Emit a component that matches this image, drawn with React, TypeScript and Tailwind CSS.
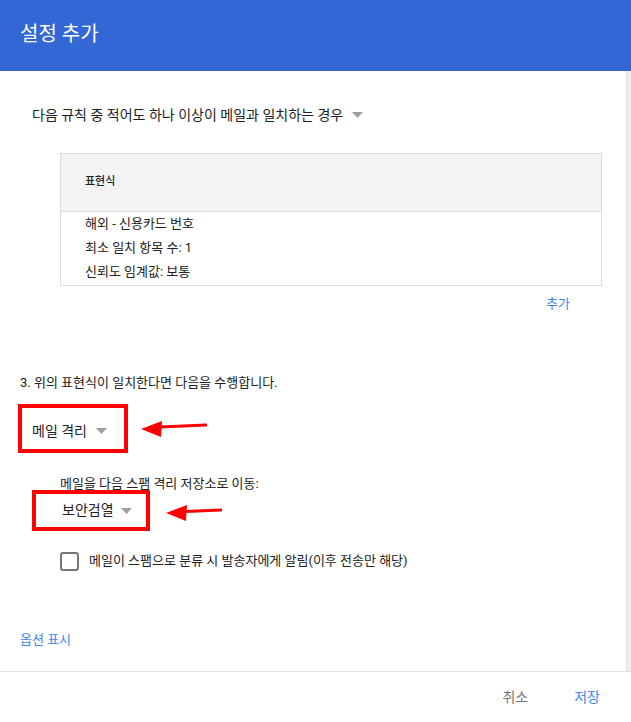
import React from 'react';

const font = "font-['Roboto','Noto_Sans_CJK_KR',sans-serif]";

function Caret() {
  return (
    <svg width="11" height="6" viewBox="0 0 11 6" className="shrink-0">
      <path d="M0 0 L11 0 L5.5 6 Z" fill="#9e9e9e" />
    </svg>
  );
}

function RedArrow({ width, tilt }: { width: number; tilt: number }) {
  return (
    <svg width={width} height="20" viewBox={`0 0 ${width} 20`} className="shrink-0">
      <path d={`M19 ${10 - tilt / 2} L${width - 1} ${10 - tilt}`} stroke="#ff0000" strokeWidth="3" strokeLinecap="round" />
      <path d="M0 10 L21 2 L20 18 Z" fill="#ff0000" />
    </svg>
  );
}

export default function App() {
  return (
    <div className={`w-[631px] h-[722px] bg-white flex flex-col overflow-hidden ${font}`}>
      {/* Header */}
      <div className="h-[71px] shrink-0 bg-[#3367d6] px-5 flex items-center">
        <h1 className="text-white text-[20px] leading-none pb-[3px]">설정 추가</h1>
      </div>

      {/* Body */}
      <div className="flex flex-1 min-h-0">
        <div className="flex-1 flex flex-col text-[#212121]">
          <div className="pt-[34px] pl-8 flex items-center gap-[9px] text-[14px] leading-5">
            <span>다음 규칙 중 적어도 하나 이상이 메일과 일치하는 경우</span>
            <Caret />
          </div>

          <div className="mt-7 ml-[60px] w-[542px] border border-[#dcdcdc]">
            <div className="h-[58px] bg-[#f3f3f3] border-b border-[#dcdcdc] pl-6 flex items-center text-[11px] font-medium">
              표현식
            </div>
            <div className="pl-6 text-[13px] leading-6 pb-[1px]">
              <div>해외 - 신용카드 번호</div>
              <div>최소 일치 항목 수: 1</div>
              <div>신뢰도 임계값: 보통</div>
            </div>
          </div>

          <div className="mt-2 pr-[56px] flex justify-end">
            <span className="text-[#4285f4] text-[13px] leading-5">추가</span>
          </div>

          <div className="mt-[59px] pl-5 text-[13px] leading-5">3. 위의 표현식이 일치한다면 다음을 수행합니다.</div>

          <div className="mt-[11px] ml-[18px] flex items-center gap-[13px]">
            <div className="w-[110px] h-[49px] border-4 border-[#ff0000] pl-[10px] pt-[5px] flex items-center gap-[9px] text-[14px]">
              <span>메일 격리</span>
              <Caret />
            </div>
            <RedArrow width={66} tilt={4} />
          </div>

          <div className="mt-[21px] pl-[60px] text-[13px] leading-5">메일을 다음 스팸 격리 저장소로 이동:</div>

          <div className="-mt-1 ml-8 flex items-center gap-[16px]">
            <div className="w-[118px] h-[41px] border-4 border-[#ff0000] pl-[26px] flex items-center gap-[7px] text-[14px]">
              <span>보안검열</span>
              <Caret />
            </div>
            <div className="pt-[4px]">
              <RedArrow width={56} tilt={3} />
            </div>
          </div>

          <div className="mt-5 pl-[60px] flex items-center gap-[10px] text-[13px] leading-5">
            <div className="w-[19px] h-[19px] border-2 border-[#757575] rounded-[3px]" />
            <span>메일이 스팸으로 분류 시 발송자에게 알림(이후 전송만 해당)</span>
          </div>

          <div className="mt-[59px] pl-5 text-[13px] leading-5 text-[#4285f4]">옵션 표시</div>
        </div>
        <div className="w-[5px] bg-[#ececec] border-l border-[#e3e3e3]" />
      </div>

      {/* Footer */}
      <div className="h-[51px] shrink-0 border-t border-[#e0e0e0] flex items-center justify-end gap-[46px] pr-[31px] text-[14px]">
        <span className="text-[#757575]">취소</span>
        <span className="text-[#4285f4]">저장</span>
      </div>
    </div>
  );
}
